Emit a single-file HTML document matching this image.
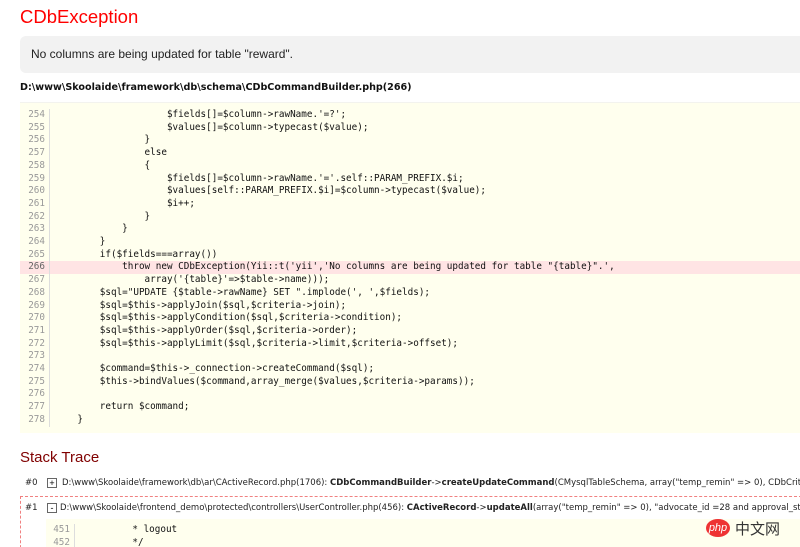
<!DOCTYPE html>
<html><head><meta charset="utf-8"><style>
html,body{margin:0;background:#fff;width:800px;height:547px;overflow:hidden}
#w{position:relative;width:800px;height:547px;overflow:hidden;font-family:"Liberation Sans",sans-serif}
.a{position:absolute;white-space:pre}
h1{position:absolute;left:20px;top:6px;margin:0;font-weight:normal;font-size:18.5px;color:#f00}
.msg{position:absolute;left:20px;top:36px;width:769px;height:37px;background:#f2f2f2;border-radius:6px 0 0 6px;font-size:12px;line-height:37px;padding-left:11px;color:#222}
.file{left:20px;top:82px;font-size:9.6px;font-weight:bold;color:#111;font-family:"DejaVu Sans",sans-serif}
.code{position:absolute;left:20px;top:102px;width:780px;height:330px;background:#ffffee;border-top:1px solid #f3f3ee;overflow:hidden}
.ln{position:absolute;left:0;width:25px;text-align:right;font-family:"DejaVu Sans Mono",monospace;font-size:9.3px;color:#999;border-right:1px solid #ddd;padding-right:4px}
.cd{position:absolute;left:35px;font-family:"DejaVu Sans Mono",monospace;font-size:9.3px;color:#111;white-space:pre}
.hl{position:absolute;left:0;width:780px;height:12.7px;background:#ffe4e4}
h2{position:absolute;left:20px;top:449px;margin:0;font-weight:normal;font-size:15px;color:#800000}
.tr{font-size:8.5px;color:#222;font-family:"DejaVu Sans",sans-serif}
.box{position:absolute;width:8px;height:8px;border:1px solid #666;font-size:9px;line-height:8px;text-align:center}
.dash{position:absolute;left:20px;top:496px;width:790px;height:60px;border:1px dashed #f08080}
.code2{position:absolute;left:46px;top:519px;width:754px;height:40px;background:#ffffee}
</style></head><body><div id="w">
<h1>CDbException</h1>
<div class="msg">No columns are being updated for table "reward".</div>
<div class="a file">D:\www\Skoolaide\framework\db\schema\CDbCommandBuilder.php(266)</div>
<div class="code">
<div class="hl" style="top:158px"></div>
<div class="ln" style="top:6px;line-height:12.7px;height:318px">254
255
256
257
258
259
260
261
262
263
264
265
<span style="color:#666">266</span>
267
268
269
270
271
272
273
274
275
276
277
278</div>
<div class="cd" style="top:6px;line-height:12.7px">                    $fields[]=$column->rawName.'=?';
                    $values[]=$column->typecast($value);
                }
                else
                {
                    $fields[]=$column->rawName.'='.self::PARAM_PREFIX.$i;
                    $values[self::PARAM_PREFIX.$i]=$column->typecast($value);
                    $i++;
                }
            }
        }
        if($fields===array())
            throw new CDbException(Yii::t('yii','No columns are being updated for table "{table}".',
                array('{table}'=>$table->name)));
        $sql="UPDATE {$table->rawName} SET ".implode(', ',$fields);
        $sql=$this->applyJoin($sql,$criteria->join);
        $sql=$this->applyCondition($sql,$criteria->condition);
        $sql=$this->applyOrder($sql,$criteria->order);
        $sql=$this->applyLimit($sql,$criteria->limit,$criteria->offset);

        $command=$this->_connection->createCommand($sql);
        $this->bindValues($command,array_merge($values,$criteria->params));

        return $command;
    }</div>
</div>
<h2>Stack Trace</h2>
<div class="a tr" style="left:25px;top:478px">#0</div>
<div class="box" style="left:47px;top:478px">+</div>
<div class="a tr" style="left:62px;top:478px">D:\www\Skoolaide\framework\db\ar\CActiveRecord.php(1706): <b>CDbCommandBuilder</b>-&gt;<b>createUpdateCommand</b>(CMysqlTableSchema, array("temp_remin" =&gt; 0), CDbCriteria)</div>
<div class="dash"></div>
<div class="a tr" style="left:25px;top:503px">#1</div>
<div class="box" style="left:47px;top:503px">-</div>
<div class="a tr" style="left:60px;top:503px">D:\www\Skoolaide\frontend_demo\protected\controllers\UserController.php(456): <b>CActiveRecord</b>-&gt;<b>updateAll</b>(array("temp_remin" =&gt; 0), "advocate_id =28 and approval_status=1")</div>
<div class="code2">
<div class="ln" style="top:5px;line-height:12.7px;width:24px">451
452</div>
<div class="cd" style="left:36px;top:5px;line-height:12.7px">         * logout
         */</div>
</div>
<div class="a" style="left:706px;top:519px;width:24px;height:18px;border-radius:50%;background:#e33;color:#fff;font-size:11px;line-height:18px;text-align:center;font-style:italic">php</div>
<div class="a" style="left:735px;top:518px;font-size:15px;color:#333;font-family:'Liberation Sans','Noto Sans CJK SC',sans-serif">中文网</div>
</div></body></html>
